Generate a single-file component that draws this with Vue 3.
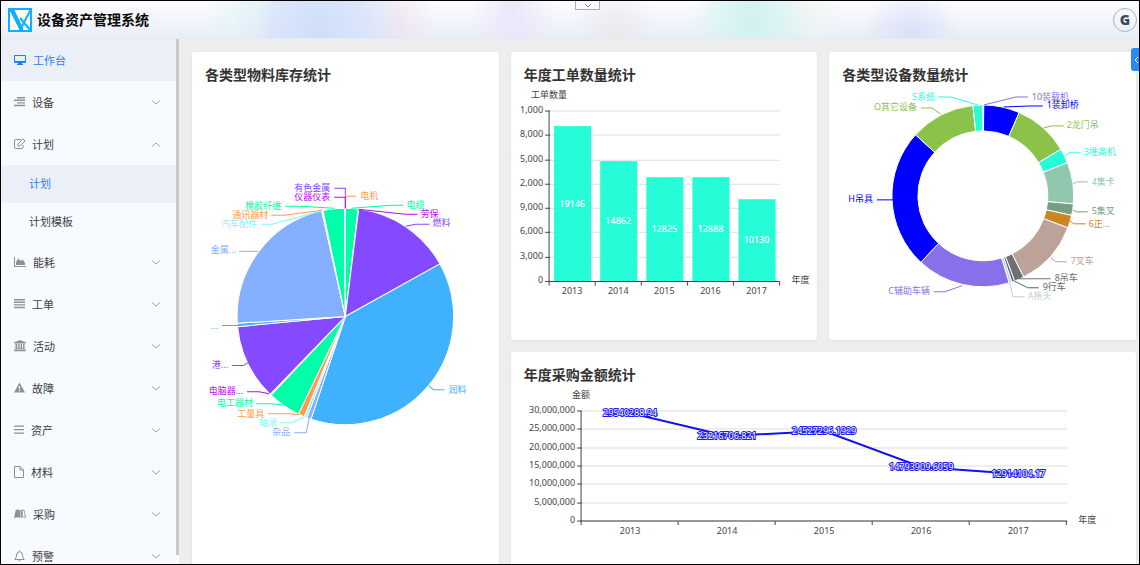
<script setup>
import { ref } from 'vue'

const open = ref({ plan: true })
const toggle = (id) => { open.value = { ...open.value, [id]: !open.value[id] } }

const menu = [
  { id: 'device', label: '设备', w: 11, d: 'M3 1h8v1.4H3zM0 3.6h11V5H0zM3 6.2h8v1.4H3zM0 8.8h11v1.4H0z' },
  { id: 'plan', label: '计划', w: 11, line: 'M7 1.5H2Q.5 1.5 .5 3V9Q.5 10.500 2 10.500H7.500Q9 10.500 9 9V7M4 8V6L9 1L11 3L6 8Z', children: ['计划', '计划模板'] },
  { id: 'energy', label: '能耗', w: 12, d: 'M0 1h1v9h11v1H0zM2 9V6l2.500-3.500L6.500 5 8.500 3.500 11 7v2z' },
  { id: 'order', label: '工单', w: 11, d: 'M0 1h11v1.400H0zM0 3.600h11V5H0zM0 6.200h11v1.400H0zM0 8.800h11v1.400H0z' },
  { id: 'activity', label: '活动', w: 12, d: 'M6 0l6 2.500v1H0v-1zM1.500 4h1.800v4.500h1V4h1.400v4.500h1V4h1.400v4.500h1V4h1.400v4.500h.8v1H.7v-1h.8zM0 10h12v1.200H0z' },
  { id: 'fault', label: '故障', w: 11, d: 'M5.500 .5L11 10.500H0zM4.800 4l.2 3.400h1L6.200 4zM4.900 8v1.300h1.200V8z' },
  { id: 'asset', label: '资产', w: 10, d: 'M0 1.500h10v1.300H0zM0 5h10v1.300H0zM0 8.500h10v1.300H0z' },
  { id: 'material', label: '材料', w: 10, line: 'M.5 .5H6L9.500 4V11.500H.5ZM6 .5V4H9.500' },
  { id: 'purchase', label: '采购', w: 12, d: 'M1.800 2Q4 .8 6 2.200V9.800Q3.500 8.800 0 10zM6.500 2.200Q8.500 .8 10.400 2L12 10Q9 8.800 6.500 9.800zM8.700 2.500V8.500Q10 8.500 10.900 8.800L9.800 2.500z' },
  { id: 'alert', label: '预警', w: 11, line: 'M.8 9.500Q2.500 8 2.500 5Q2.500 2 5.500 1.700Q8.500 2 8.500 5Q8.500 8 10.200 9.500ZM5.500 .3V1.700M4.300 10Q5.500 12 6.700 10' }
]

const C = {
  green: '#00ffa8', purple: '#8549ff', sky: '#40b1ff', peri: '#84b0ff', aqua: '#80f5ff',
  orange: '#ff9c4d', magenta: '#b80af5',
  blue: '#0000ff', lime: '#8bc34a', teal: '#26fcd8', mint: '#91c7ae', moss: '#749f83',
  ochre: '#ca8622', rose: '#bda29a', gray: '#6e7074', slate: '#546570', silver: '#c4ccd3', violet: '#8870eb'
}

function sector(cx, cy, R, r, a0, a1) {
  const p = (rad, a) => {
    const t = (a * Math.PI) / 180
    return `${(cx + rad * Math.sin(t)).toFixed(2)} ${(cy - rad * Math.cos(t)).toFixed(2)}`
  }
  const big = a1 - a0 > 180 ? 1 : 0
  if (!r) return `M${cx} ${cy}L${p(R, a0)}A${R} ${R} 0 ${big} 1 ${p(R, a1)}Z`
  return `M${p(R, a0)}A${R} ${R} 0 ${big} 1 ${p(R, a1)}L${p(r, a1)}A${r} ${r} 0 ${big} 0 ${p(r, a0)}Z`
}
function slices(cx, cy, R, r, stops) {
  let a = 0
  return stops.map(([end, color]) => {
    const d = sector(cx, cy, R, r, a, end)
    a = end
    return { d, color }
  })
}

const stock = slices(345, 316, 108, 0, [
  [6.8, C.green], [7.1, C.magenta], [60.9, C.purple], [198.5, C.sky], [200.8, C.peri], [202.3, C.aqua],
  [205.7, C.orange], [223.4, C.green], [224, C.magenta], [264.6, C.purple], [266.4, C.sky],
  [347.4, C.peri], [347.8, C.aqua], [348.1, C.orange], [359.6, C.green], [360, C.purple]
])
const stockLabels = [
  ['有色金属', 330, 188, 'end', C.purple, '334,188 345,188 345,208'],
  ['仪器仪表', 330, 197, 'end', C.magenta, '334,197 345,197 345,208'],
  ['电机', 360, 196, 'start', C.orange, '345,196 356,196'],
  ['电缆', 406, 205, 'start', C.green, '351,208 391,205 403,205'],
  ['劳保', 420, 214, 'start', C.magenta, '358,209 405,214 417,214'],
  ['燃料', 432, 223, 'start', C.purple, '405,226 415,224 429,224'],
  ['橡胶纤维', 281, 206, 'end', C.green, '285,206 300,206 334,208'],
  ['通讯器材', 268, 215, 'end', C.orange, '271,215 284,215 322,210'],
  ['汽车配件', 257, 224, 'end', C.aqua, '261,224 272,224 320,211'],
  ['金属...', 236, 250, 'end', C.peri, '239,251 258,251'],
  ['...', 218, 325, 'end', C.sky, '222,325 238,325'],
  ['港...', 228, 364, 'end', C.purple, '232,365 243,365 248,362'],
  ['电脑器...', 243, 390, 'end', C.magenta, '247,391 259,391 269,393'],
  ['电工器材', 253, 402, 'end', C.green, '256,403 270,403 282,404'],
  ['工量具', 264, 413, 'end', C.orange, '268,413 290,413 299,414'],
  ['轴承', 277, 422, 'end', C.aqua, '280,422 292,422 304,416'],
  ['杂品', 290, 431, 'end', C.peri, '294,432 306,432 309,417'],
  ['润料', 448, 389, 'start', C.sky, '428,385 433,389 444,389']
]

const devices = slices(983, 196, 91, 65, [
  [0.6, C.violet], [23.6, C.blue], [59.2, C.lime], [68.6, C.teal], [95.1, C.mint], [102.4, C.moss],
  [110.6, C.ochre], [153.3, C.rose], [159.6, C.gray], [161.4, C.slate], [163.2, C.silver],
  [223, C.violet], [312.2, C.blue], [353.7, C.lime], [360, C.teal]
])
const deviceLabels = [
  ['S系统', 935, 97, 'end', C.teal, '938,97 951,97 978,105'],
  ['O其它设备', 917, 107, 'end', C.lime, '921,108 932,108 941,114'],
  ['10装载机', 1032, 97, 'start', C.violet, '984,105 1016,97 1028,97'],
  ['1装卸桥', 1047, 105, 'start', C.blue, '1004,107 1030,106 1043,106'],
  ['2龙门吊', 1067, 125, 'start', C.lime, '1044,128 1052,126 1064,126'],
  ['3堆高机', 1084, 152, 'start', C.teal, '1065,157 1069,153 1081,153'],
  ['4集卡', 1092, 182, 'start', C.mint, '1073,184 1077,182 1088,182'],
  ['5集叉', 1092, 211, 'start', C.moss, '1073,210 1077,212 1088,212'],
  ['6正...', 1089, 224, 'start', C.ochre, '1070,221 1074,224 1086,224'],
  ['7叉车', 1071, 261, 'start', C.rose, '1051,258 1056,262 1067,262'],
  ['8吊车', 1055, 278, 'start', C.gray, '1018,279 1028,279 1051,279'],
  ['9行车', 1043, 287, 'start', C.slate, '1014,281 1028,288 1039,288'],
  ['A拖头', 1028, 296, 'start', C.silver, '1010,283 1013,297 1025,297'],
  ['C辅助车辆', 930, 291, 'end', C.violet, '934,292 945,292 962,286'],
  ['H吊具', 873, 199, 'end', C.blue, '877,200 893,200']
]

const years = [2013, 2014, 2015, 2016, 2017]
const orders = [19146, 14862, 12825, 12888, 10130].map((v, i) => {
  const h = Math.round((v / 21000) * 170)
  return { v, x: 554 + i * 46, y: 281 - h, h }
})
const orderTicks = ['0', '3,000', '6,000', '9,000', '2,000', '5,000', '8,000', '1,000']
  .map((t, i) => ({ t, y: Math.round(281 - (i * 170) / 7) }))

const amounts = ['29540288.94', '23216706.821', '24527296.1929', '14793909.6059', '12914104.17']
  .map((t, i) => ({ t, x: 630 + i * 97, y: Math.round(521 - (Number(t) / 30000000) * 110) }))
const amountPath = amounts.map((p) => `${p.x},${p.y}`).join(' ')
const amountTicks = ['0', '5,000,000', '10,000,000', '15,000,000', '20,000,000', '25,000,000', '30,000,000']
  .map((t, i) => ({ t, y: Math.round(521 - (i * 110) / 6) }))
</script>

<template>
  <div class="page">
    <header class="topbar">
      <svg class="logo" viewBox="0 0 24 24" aria-hidden="true">
        <rect x="1" y="1" width="22" height="22" fill="#fff" stroke="#10aeff" stroke-width="2" />
        <path d="M1 1H6L15 20V23H12Z" fill="#10aeff" />
        <path d="M23 1L12 22M12 10L23 23" fill="none" stroke="#10aeff" stroke-width="2" />
      </svg>
      <h1>设备资产管理系统</h1>
      <button class="pull" aria-label="展开顶栏">
        <svg viewBox="0 0 8 5"><path d="M1 1L4 4L7 1" /></svg>
      </button>
      <button class="avatar">G</button>
    </header>

    <div class="body">
      <nav class="sidebar">
        <a class="item active" href="#workbench">
          <svg class="icon" width="12" height="12" viewBox="0 0 12 12"><path fill="#1b7dff" fill-rule="evenodd" d="M1 1H11Q12 1 12 2V8Q12 9 11 9H1Q0 9 0 8V2Q0 1 1 1ZM1 2V7H11V2ZM4 9H8V10H9V11H3V10H4Z" /></svg>
          <span>工作台</span>
        </a>
        <template v-for="m in menu" :key="m.id">
          <button class="item" :aria-expanded="!!open[m.id]" @click="toggle(m.id)">
            <svg class="icon" :width="m.w" height="12" :viewBox="`0 0 ${m.w} 12`">
              <path v-if="m.d" :d="m.d" fill="#8d9095" fill-rule="evenodd" />
              <path v-else :d="m.line" fill="none" stroke="#8d9095" />
            </svg>
            <span>{{ m.label }}</span>
            <svg class="chevron" :class="{ up: open[m.id] }" viewBox="0 0 8 5"><path d="M0 0.500L4 4L8 0.500" /></svg>
          </button>
          <template v-if="m.children && open[m.id]">
            <a v-for="(c, i) in m.children" :key="c" class="sub" :class="{ active: i === 0 }" :href="`#${m.id}-${i}`">{{ c }}</a>
          </template>
        </template>
      </nav>
      <div class="scroll"><div class="thumb"></div></div>

      <main class="board">
        <section class="card tall">
          <h2>各类型物料库存统计</h2>
          <svg class="chart" viewBox="192 85 306 400">
            <path v-for="(s, i) in stock" :key="i" :d="s.d" :fill="s.color" class="slice" />
            <g v-for="l in stockLabels" :key="l[0]">
              <polyline :points="l[5]" :stroke="l[4]" class="leader" />
              <text :x="l[1]" :y="l[2] + 3" :text-anchor="l[3]" :fill="l[4]">{{ l[0] }}</text>
            </g>
          </svg>
        </section>

        <section class="card">
          <h2>年度工单数量统计</h2>
          <svg class="chart" viewBox="511 85 306 254">
            <g v-for="t in orderTicks" :key="t.t">
              <line class="grid" x1="550" x2="779" :y1="t.y" :y2="t.y" />
              <line class="axis" x1="545" x2="550" :y1="t.y" :y2="t.y" />
              <text x="543" :y="t.y + 2" text-anchor="end">{{ t.t }}</text>
            </g>
            <g v-for="(b, i) in orders" :key="b.v">
              <rect :x="b.x" :y="b.y" width="37" :height="b.h" class="bar" />
              <text :x="b.x + 18" :y="b.y + b.h / 2 + 3" text-anchor="middle" class="value">{{ b.v }}</text>
              <line class="axis" :x1="595 + i * 46" :x2="595 + i * 46" y1="281" y2="285" />
              <text :x="572 + i * 46" y="294" text-anchor="middle">{{ years[i] }}</text>
            </g>
            <path class="axis" d="M549 111V285M549 281H779" />
            <text x="549" y="98" text-anchor="middle">工单数量</text>
            <text x="791" y="283">年度</text>
          </svg>
        </section>

        <section class="card">
          <h2>各类型设备数量统计</h2>
          <svg class="chart" viewBox="829 85 307 254">
            <path v-for="(s, i) in devices" :key="i" :d="s.d" :fill="s.color" class="slice" />
            <g v-for="l in deviceLabels" :key="l[0]">
              <polyline :points="l[5]" :stroke="l[4]" class="leader" />
              <text :x="l[1]" :y="l[2] + 3" :text-anchor="l[3]" :fill="l[4]">{{ l[0] }}</text>
            </g>
          </svg>
        </section>

        <section class="card wide">
          <h2>年度采购金额统计</h2>
          <svg class="chart" viewBox="511 385 625 200">
            <g v-for="t in amountTicks" :key="t.t">
              <line class="grid" x1="582" x2="1067" :y1="t.y" :y2="t.y" />
              <line class="axis" x1="577" x2="582" :y1="t.y" :y2="t.y" />
              <text x="575" :y="t.y + 2" text-anchor="end">{{ t.t }}</text>
            </g>
            <g v-for="(y, i) in years" :key="y">
              <line class="axis" :x1="678 + i * 97" :x2="678 + i * 97" y1="521" y2="525" />
              <text :x="630 + i * 97" y="534" text-anchor="middle">{{ y }}</text>
            </g>
            <path class="axis" d="M581 411V525M581 521H1067" />
            <polyline :points="amountPath" class="trend" />
            <text v-for="p in amounts" :key="p.t" :x="p.x" :y="p.y + 3" text-anchor="middle" class="amount">{{ p.t }}</text>
            <text x="581" y="398" text-anchor="middle">金额</text>
            <text x="1078" y="523">年度</text>
          </svg>
        </section>
      </main>
    </div>
    <button class="drawer" aria-label="展开侧栏">
      <svg viewBox="0 0 5 8"><path d="M4 1L1 4L4 7" /></svg>
    </button>
  </div>
</template>

<style>
body { margin: 0; }
</style>

<style scoped>
.page {
  position: relative;
  display: flex;
  flex-direction: column;
  height: 100vh;
  box-sizing: border-box;
  border: 1px solid #000;
  overflow: hidden;
  background: #eee;
  color: #404246;
  font-family: "Noto Sans", "Noto Sans CJK SC", sans-serif;
  font-size: 11px;
}
button { font: inherit; color: inherit; border: 0; background: none; padding: 0; cursor: pointer; }
svg { display: block; }

.topbar {
  display: flex;
  align-items: center;
  flex: none;
  gap: 5px;
  height: 37px;
  padding: 0 2px 0 7px;
  border-bottom: 1px solid #e6e8ee;
  background:
    radial-gradient(ellipse 34px 90px at 21% 20%, #def5f399, transparent),
    radial-gradient(ellipse 86px 130px at 28% 90%, #cfdefa, #d5e2facc 55%, transparent),
    radial-gradient(ellipse 36px 80px at 35% 70%, #f1e0ecaa, transparent),
    radial-gradient(ellipse 42px 80px at 45% 20%, #e6e2f9cc, transparent),
    radial-gradient(ellipse 40px 60px at 54% 90%, #e9e8eacc, transparent),
    radial-gradient(ellipse 60px 120px at 66% 50%, #cff2f2, #d8f3f1aa 55%, transparent),
    radial-gradient(ellipse 34px 70px at 71% 40%, #edf5ee99, transparent),
    radial-gradient(ellipse 50px 50px at 80% 100%, #dadff7, transparent),
    linear-gradient(#fcfcfe, #e9eef8);
}
.logo { width: 24px; height: 24px; }
h1 { flex: 1; margin: 0; font-size: 14px; line-height: 20px; font-weight: 700; color: #0a0a0a; }
.avatar {
  width: 24px;
  height: 24px;
  border: 1px solid #a9b3c4;
  border-radius: 50%;
  font-size: 14px;
  line-height: 20px;
  font-weight: 900;
  color: #3e4a61;
}
.pull {
  position: absolute;
  top: 0;
  left: 50%;
  width: 25px;
  height: 9px;
  margin-left: 5px;
  border: 1px solid #a9adb8;
  border-top: 0;
  background: #f7f8fc;
}
.pull svg { width: 8px; height: 5px; margin: auto; fill: none; stroke: #777e8c; }

.body { display: flex; flex: 1; min-height: 0; }
.sidebar {
  display: flex;
  flex-direction: column;
  flex: none;
  width: 175px;
  overflow: hidden;
  background: #f7fafe;
}
.item {
  display: flex;
  align-items: center;
  flex: none;
  gap: 7px;
  height: 42px;
  padding: 0 16px 0 13px;
  text-align: left;
  text-decoration: none;
}
.item span { flex: 1; }
.sub {
  flex: none;
  height: 38px;
  padding-left: 28px;
  line-height: 38px;
  color: inherit;
  text-decoration: none;
}
.active { background: #ebf0f8; color: #2d7ef7; }
.icon { flex: none; }
.chevron { width: 8px; height: 5px; fill: none; stroke: #a0a4ab; }
.up { transform: rotate(180deg); }
.scroll { flex: none; width: 3px; padding-bottom: 9px; box-sizing: border-box; background: #fff; }
.thumb { height: 100%; background: #c9c9c9; }

.board {
  display: grid;
  flex: 1;
  min-width: 0;
  grid-template-columns: repeat(3, minmax(0, 1fr));
  align-content: start;
  gap: 12px;
  padding: 13px 3px 12px 13px;
  overflow: hidden;
}
.card { border-radius: 3px; background: #fff; box-shadow: 0 1px 4px #0000000d; }
.tall { grid-row: span 2; }
.wide { grid-column: span 2; }
h2 { margin: 0; padding: 13px 13px 0; font-size: 14px; line-height: 20px; font-weight: 700; color: #333; }
.chart { width: 100%; height: auto; }
.chart text { font-size: 9px; }
.chart { fill: #444; }
.slice { stroke: #fff; stroke-width: 1; stroke-linejoin: bevel; }
.leader { fill: none; stroke-width: 1; }
.grid { stroke: #ddd; }
.axis { fill: none; stroke: #444; }
.bar { fill: #26fcd8; }
.chart .value { fill: #fff; font-weight: 500; }
.trend { fill: none; stroke: #1212ee; stroke-width: 2; }
.chart .amount { fill: #fff; stroke: #1a1aff; stroke-width: 2; paint-order: stroke; }

.drawer {
  position: absolute;
  top: 47px;
  right: 0;
  width: 8px;
  height: 23px;
  border-radius: 3px 0 0 3px;
  background: #2a8af4;
}
.drawer svg { width: 5px; height: 8px; margin-left: 3px; fill: none; stroke: #fff; }
</style>
